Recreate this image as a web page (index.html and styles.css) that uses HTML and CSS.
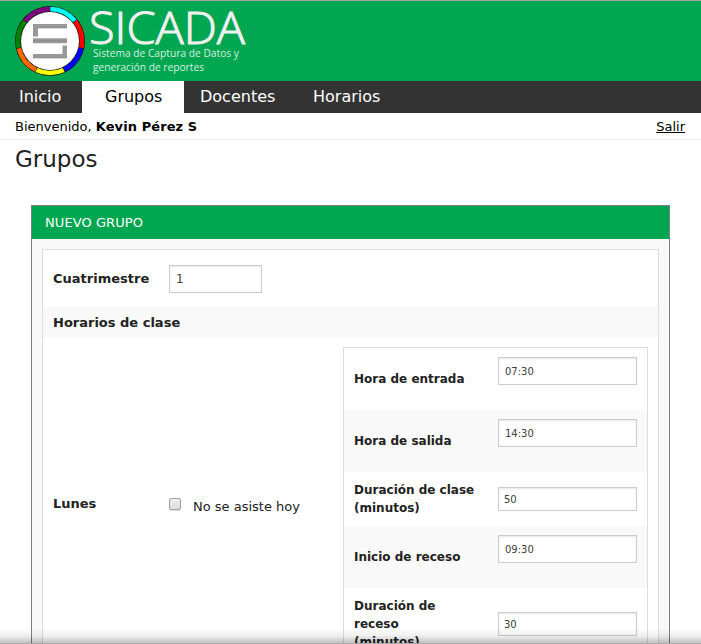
FILE: index.html
```html
<!DOCTYPE html>
<html lang="es">
<head>
<meta charset="utf-8">
<title>SICADA - Grupos</title>
<link rel="stylesheet" href="styles.css">
</head>
<body>
<div class="page">
  <header class="banner">
    <svg class="logo" width="260" height="80" viewBox="0 0 260 80" role="img" aria-label="SICADA">
      <circle cx="50" cy="40" r="35" fill="#181818"/>
      <g fill="none" stroke-width="4.6" transform="rotate(-90 50 40)">
        <circle cx="50" cy="40" r="32" pathLength="700" stroke="#00ffff" stroke-dasharray="98 602" stroke-dashoffset="-1"/>
        <circle cx="50" cy="40" r="32" pathLength="700" stroke="#ff0000" stroke-dasharray="98 602" stroke-dashoffset="-101"/>
        <circle cx="50" cy="40" r="32" pathLength="700" stroke="#0000ff" stroke-dasharray="98 602" stroke-dashoffset="-201"/>
        <circle cx="50" cy="40" r="32" pathLength="700" stroke="#ffff00" stroke-dasharray="98 602" stroke-dashoffset="-301"/>
        <circle cx="50" cy="40" r="32" pathLength="700" stroke="#ff6600" stroke-dasharray="98 602" stroke-dashoffset="-401"/>
        <circle cx="50" cy="40" r="32" pathLength="700" stroke="#008000" stroke-dasharray="98 602" stroke-dashoffset="-501"/>
        <circle cx="50" cy="40" r="32" pathLength="700" stroke="#800080" stroke-dasharray="98 602" stroke-dashoffset="-601"/>
      </g>
      <circle cx="50" cy="40" r="29" fill="#fff"/>
      <path d="M33 23h34v4H38v8.5h-5zM33 37.3h34v5H33zM62.5 44.5H67V57H33v-4h29.5z" fill="#999"/>
      <path d="M38 27h29M33 39.8h34M33 57h34" stroke="#808080" stroke-width=".6"/>
      <text class="brand" x="89" y="43" textLength="156" lengthAdjust="spacingAndGlyphs">SICADA</text>
      <text class="tagline" x="93" y="56" textLength="146" lengthAdjust="spacingAndGlyphs">Sistema de Captura de Datos y</text>
      <text class="tagline" x="93" y="69.5" textLength="111" lengthAdjust="spacingAndGlyphs">generación de reportes</text>
    </svg>
  </header>
  <nav class="menu">
    <a class="home">Inicio</a>
    <a class="active">Grupos</a>
    <a class="teachers">Docentes</a>
    <a>Horarios</a>
  </nav>
  <div class="userbar"><span>Bienvenido, <b>Kevin Pérez S</b></span><a class="logout">Salir</a></div>
  <h1>Grupos</h1>
  <section class="panel">
    <h2>Nuevo grupo</h2>
    <div class="form">
      <div class="row term"><label>Cuatrimestre</label><input class="term-input" type="text" value="1"></div>
      <div class="row heading">Horarios de clase</div>
      <div class="row day">
        <label>Lunes</label>
        <div class="absent"><span class="check"></span><span>No se asiste hoy</span></div>
        <div class="schedule">
          <div class="field"><label>Hora de entrada</label><input type="text" value="07:30"></div>
          <div class="field alt"><label>Hora de salida</label><input type="text" value="14:30"></div>
          <div class="field minutes"><label>Duración de clase (minutos)</label><input type="text" value="50"></div>
          <div class="field alt"><label>Inicio de receso</label><input type="text" value="09:30"></div>
          <div class="field minutes long"><label>Duración de receso (minutos)</label><input type="text" value="30"></div>
        </div>
      </div>
    </div>
  </section>
  <div class="edge-shadow"></div>
</div>
</body>
</html>
```
FILE: styles.css
```css
* { box-sizing: border-box; }
body { margin: 0; background: #fff; color: #222; font: 13px "DejaVu Sans", sans-serif; }
.page { position: relative; height: 644px; overflow: hidden; }
.banner { height: 81px; border-top: 1px solid #a5a5a5; background: #00a650; }
.logo { display: block; }
.brand { font: 300 44.5px "Open Sans", sans-serif; fill: #f0f0f0; stroke: #f0f0f0; stroke-width: 1; }
.tagline { font: 10px "Open Sans", sans-serif; fill: #d5f0e0; }

.menu { display: flex; height: 32px; background: #333; font-size: 16px; line-height: 31px; }
.menu a { color: #fff; padding-left: 19px; }
.menu .home { width: 82px; }
.menu .active { width: 102px; padding-left: 23px; background: #fff; color: #000; }
.menu .teachers { width: 110px; padding-left: 16px; }

.userbar { display: flex; justify-content: space-between; height: 27px; padding: 0 16px 0 15px; border-bottom: 1px solid #eaeaea; color: #000; line-height: 27px; }
.userbar b { letter-spacing: .08px; }
.logout { text-decoration: underline; }
h1 { margin: 0; padding: 5px 0 0 15px; height: 65px; font-size: 23px; font-weight: 400; line-height: 28px; }

.panel { width: 639px; height: 700px; margin-left: 31px; border: 1px solid #808080; background: #f9f9f9; }
h2 { margin: 0; padding-left: 13px; height: 33px; background: #00a650; color: #fff; font-size: 13px; font-weight: 400; letter-spacing: .08px; line-height: 33px; text-transform: uppercase; }
.form { margin: 10px 10px 0; border: 1px solid #ddd; background: #fff; }
label, .heading { font-weight: 700; }
.row { display: flex; padding-left: 10px; }
.row > label { width: 116px; flex: none; }
.term { height: 57px; align-items: center; }
.heading { height: 31px; line-height: 31px; background: #f9f9f9; }
.day { height: 332px; align-items: center; }
.day > label { padding-bottom: 2px; }

input { height: 28px; padding: 0 6px; border: 1px solid #ccc; border-radius: 0; background: #fff; box-shadow: inset 0 1px 2px rgba(0,0,0,.1); color: #404040; font: 10px "DejaVu Sans", sans-serif; }
.term-input { width: 93px; font-size: 12px; }
.absent { display: flex; width: 174px; gap: 12px; padding-top: 2px; align-items: flex-start; }
.absent span:last-child { padding-top: 3px; }
.check { width: 12px; height: 12px; margin-top: 2px; border: 1px solid #a0a0a0; border-radius: 2px; background: linear-gradient(#eee, #dcdcdc); box-shadow: 0 1px 1px #ddd; }

.schedule { align-self: flex-start; width: 305px; height: 340px; margin-top: 9px; border: 1px solid #ddd; font-size: 12px; line-height: 18px; }
.field { display: flex; height: 62px; padding-left: 10px; align-items: center; background: #fff; }
.field label { width: 144px; padding-right: 14px; flex: none; }
.field input { width: 139px; align-self: flex-start; margin-top: 9px; }
.alt { background: #f9f9f9; }
.minutes { height: 54px; }
.minutes input { height: 24px; margin-top: 15px; padding-left: 5px; }
.long { height: 72px; }
.long label { padding-right: 50px; }
.long input { margin-top: 24px; }

.edge-shadow { position: absolute; left: 0; right: 0; bottom: 0; height: 16px; border-bottom: 1px solid #aaa; background: linear-gradient(rgba(0,0,0,0), rgba(0,0,0,.06) 50%, rgba(0,0,0,.24)); }
```
